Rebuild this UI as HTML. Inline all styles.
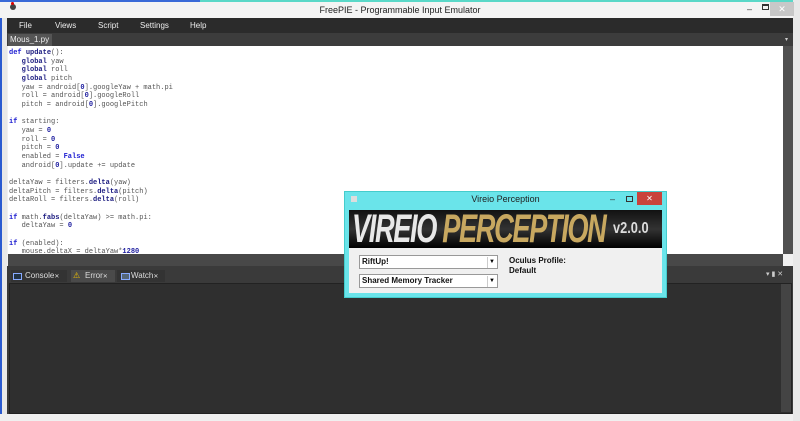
<!DOCTYPE html>
<html><head><style>
*{margin:0;padding:0;box-sizing:border-box}
body{width:800px;height:421px;overflow:hidden;background:#f0f0f0;position:relative;font-family:"Liberation Sans",sans-serif}
.a{position:absolute}
.code{font-family:"Liberation Mono",monospace;font-size:7px;line-height:8.67px;color:#555;white-space:pre}
.k{color:#1a1ad0;font-weight:bold}
.b{color:#1a1a80;font-weight:bold}
.n{color:#2020a0;font-weight:bold}
.menu span{position:absolute;top:3px;font-size:8px;color:#eee}
.tab{position:absolute;top:0;height:12px;font-size:8px;color:#ddd;padding-left:14px;line-height:12px}
</style></head><body>
<div class="a" style="left:0;top:0;width:800px;height:18px;background:#f4f4f4"></div>
<div class="a" style="left:0;top:0;width:200px;height:2px;background:#3a6ad8"></div>
<div class="a" style="left:200px;top:0;width:600px;height:2px;background:#5ad8c8"></div>
<div class="a" style="left:0;top:18px;width:7px;height:396px;background:#e8e8e8"></div>
<div class="a" style="left:0;top:18px;width:2px;height:396px;background:#2a5ad0"></div>
<div class="a" style="left:793px;top:0;width:7px;height:421px;background:#e8e8e8"></div>
<div class="a" style="left:10px;top:4px;width:6px;height:6px;background:#444;border-radius:3px"></div>
<div class="a" style="left:11px;top:2px;width:3px;height:3px;background:#d00;border-radius:2px"></div>
<div class="a" style="left:0;top:5px;width:800px;text-align:center;font-size:9px;color:#222">FreePIE - Programmable Input Emulator</div>
<div class="a" style="left:747px;top:4px;font-size:9px;color:#333">–</div>
<div class="a" style="left:762px;top:4px;width:7px;height:6px;border:1px solid #333;border-top-width:2px"></div>
<div class="a" style="left:770px;top:2px;width:24px;height:14px;background:#c8c8c8;color:#fff;font-size:9px;text-align:center;line-height:14px">✕</div>
<div class="a menu" style="left:7px;top:18px;width:786px;height:15px;background:#2b2b2b">
<span style="left:12px">File</span><span style="left:48px">Views</span><span style="left:91px">Script</span><span style="left:133px">Settings</span><span style="left:183px">Help</span></div>
<div class="a" style="left:7px;top:33px;width:786px;height:13px;background:#3c3c3c"></div>
<div class="a" style="left:8px;top:34px;width:44px;height:12px;background:#555;font-size:8px;color:#eee;padding:1px 2px">Mous_1.py <span style="font-size:6px;color:#bbb">×</span></div>
<div class="a" style="left:785px;top:36px;font-size:6px;color:#ccc">▾</div>
<div class="a" style="left:8px;top:46px;width:775px;height:208px;background:#fff"></div>
<div class="a" style="left:783px;top:46px;width:10px;height:208px;background:#505050"></div>
<div class="a" style="left:8px;top:254px;width:775px;height:12px;background:#484848"></div>
<div class="a" style="left:783px;top:254px;width:10px;height:12px;background:#f0f0f0"></div>
<div class="a code" style="left:9px;top:49px"><span class="k">def</span> <span class="b">update</span>():
   <span class="b">global</span> yaw
   <span class="b">global</span> roll
   <span class="b">global</span> pitch
   yaw = android[<span class="n">0</span>].googleYaw + math.pi
   roll = android[<span class="n">0</span>].googleRoll
   pitch = android[<span class="n">0</span>].googlePitch

<span class="k">if</span> starting:
   yaw = <span class="n">0</span>
   roll = <span class="n">0</span>
   pitch = <span class="n">0</span>
   enabled = <span class="k">False</span>
   android[<span class="n">0</span>].update += update

deltaYaw = filters.<span class="b">delta</span>(yaw)
deltaPitch = filters.<span class="b">delta</span>(pitch)
deltaRoll = filters.<span class="b">delta</span>(roll)

<span class="k">if</span> math.<span class="b">fabs</span>(deltaYaw) &gt;= math.pi:
   deltaYaw = <span class="n">0</span>

<span class="k">if</span> (enabled):
   mouse.deltaX = deltaYaw*<span class="n">1280</span></div>
<div class="a" style="left:7px;top:266px;width:786px;height:148px;background:#3a3a3a"></div>
<div class="a" style="left:8px;top:270px;width:775px;height:13px">
<div class="tab" style="left:3px;width:56px;background:#333">Console<span style="font-size:6px">✕</span></div>
<div class="tab" style="left:63px;width:44px;background:#4a4a4a"><span style="color:#f0c000;position:absolute;left:2px">⚠</span>Error<span style="font-size:6px">✕</span></div>
<div class="tab" style="left:109px;width:48px;background:#333">Watch<span style="font-size:6px">✕</span></div>
<div class="a" style="left:5px;top:3px;width:9px;height:7px;border:1px solid #8af;background:#234"></div>
<div class="a" style="left:113px;top:3px;width:9px;height:7px;border:1px solid #8af;background:#567"></div>
</div>
<div class="a" style="left:766px;top:270px;font-size:7px;color:#ccc">▾ ▮ ✕</div>
<div class="a" style="left:9px;top:283px;width:783px;height:131px;background:#2f2f2f;border:1px solid #222"></div>
<div class="a" style="left:781px;top:284px;width:10px;height:128px;background:#444"></div>
<div class="a" style="left:344px;top:191px;width:323px;height:107px;background:#6ae4ea;border:1px solid #4cc"></div>
<div class="a" style="left:344px;top:194px;width:323px;text-align:center;font-size:9px;color:#222">Vireio Perception</div>
<div class="a" style="left:351px;top:196px;width:6px;height:6px;background:#ddd"></div>
<div class="a" style="left:610px;top:194px;font-size:9px;color:#333">–</div>
<div class="a" style="left:626px;top:196px;width:7px;height:6px;border:1px solid #333"></div>
<div class="a" style="left:637px;top:192px;width:25px;height:13px;background:#c9433c;color:#fff;font-size:8px;text-align:center;line-height:13px">✕</div>
<div class="a" style="left:349px;top:210px;width:313px;height:38px;background:linear-gradient(#111,#333 50%,#000)"></div>
<div class="a" style="left:352px;top:208px;font-family:'Liberation Sans',sans-serif;font-weight:bold;font-style:italic;font-size:40px;letter-spacing:-2px;transform:scaleX(0.68);transform-origin:left;white-space:nowrap;line-height:42px"><span style="color:#e8e8e8">VIREIO </span><span style="color:#c8a860">PERCEPTION</span></div>
<div class="a" style="left:613px;top:220px;font-weight:bold;font-size:16px;color:#ddd;transform:scaleX(0.8);transform-origin:left">v2.0.0</div>
<div class="a" style="left:349px;top:248px;width:313px;height:45px;background:#f0f0f0"></div>
<div class="a" style="left:359px;top:255px;width:139px;height:14px;background:#fff;border:1px solid #999;font-size:8px;font-weight:bold;padding:1px 2px;color:#111">RiftUp!</div>
<div class="a" style="left:359px;top:274px;width:139px;height:14px;background:#fff;border:1px solid #999;font-size:8px;font-weight:bold;padding:1px 2px;color:#111">Shared Memory Tracker</div>
<div class="a" style="left:487px;top:257px;width:9px;height:11px;font-size:6px;text-align:center;line-height:11px;border-left:1px solid #ccc">▼</div>
<div class="a" style="left:487px;top:276px;width:9px;height:11px;font-size:6px;text-align:center;line-height:11px;border-left:1px solid #ccc">▼</div>
<div class="a" style="left:509px;top:256px;font-size:8px;font-weight:bold;color:#111;line-height:10px">Oculus Profile:<br>Default</div>
</body></html>
